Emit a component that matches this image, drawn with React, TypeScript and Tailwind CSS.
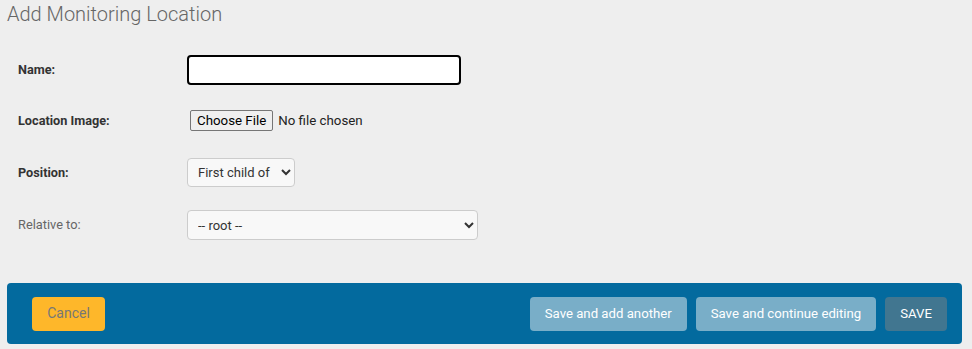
import React from "react";

const labelCls = "w-[169px] shrink-0 text-[12.7px] font-bold text-[#333]";

export default function App() {
  return (
    <div className="min-h-[349px] w-[972px] bg-[#eeeeee] font-['Roboto',sans-serif]">
      <h1 className="px-[7px] pt-[2px] text-[20px] font-light leading-[24px] text-[#666]">
        Add Monitoring Location
      </h1>

      <form className="mt-[29px]">
        <div className="flex items-center pl-[18px]">
          <label className={labelCls}>Name:</label>
          <input
            type="text"
            className="h-[30px] w-[274px] rounded-[4px] border-2 border-black bg-white px-2 text-[13px] outline-none"
          />
        </div>

        <div className="mt-[25px] flex items-center pl-[18px]">
          <label className={labelCls}>Location Image:</label>
          <input
            type="file"
            className="ml-[3px] h-[21px] text-[13.3px] text-[#222] font-['Roboto',sans-serif] file:mr-[5px] file:h-[21px] file:rounded-[2px] file:border file:border-solid file:border-[#767676] file:bg-[#efefef] file:px-[6px] file:text-[13.3px] file:text-black"
          />
        </div>

        <div className="mt-[27px] flex items-center pl-[18px]">
          <label className={labelCls}>Position:</label>
          <select className="h-[29px] w-[108px] rounded-[4px] border border-[#ccc] bg-[#f8f8f8] pl-[6px] pr-[2px] text-[13px] text-[#333]">
            <option>First child of</option>
          </select>
        </div>

        <div className="mt-[23px] flex items-center pl-[18px]">
          <label className="w-[169px] shrink-0 text-[12.8px] text-[#666]">Relative to:</label>
          <select className="h-[30px] w-[291px] rounded-[4px] border border-[#ccc] bg-[#f8f8f8] pl-[6px] text-[13px] text-[#333]">
            <option>-- root --</option>
          </select>
        </div>

        <div className="mx-[7px] mt-[43px] flex h-[61px] w-[955px] items-center justify-between rounded-[4px] bg-[#036a9e] pl-[25px] pr-[15px]">
          <button
            type="button"
            className="h-[34px] w-[73px] rounded-[4px] bg-[#feb72a] text-[14px] text-[#777]"
          >
            Cancel
          </button>
          <div className="flex items-center gap-[9px]">
            <button
              type="button"
              className="h-[34px] rounded-[4px] bg-[#79aec8] px-[15px] text-[13.2px] text-white"
            >
              Save and add another
            </button>
            <button
              type="button"
              className="h-[34px] rounded-[4px] bg-[#79aec8] px-[15px] text-[13.2px] text-white"
            >
              Save and continue editing
            </button>
            <button
              type="button"
              className="h-[34px] rounded-[4px] bg-[#417690] px-[15px] text-[13.2px] text-white"
            >
              SAVE
            </button>
          </div>
        </div>
      </form>
    </div>
  );
}
